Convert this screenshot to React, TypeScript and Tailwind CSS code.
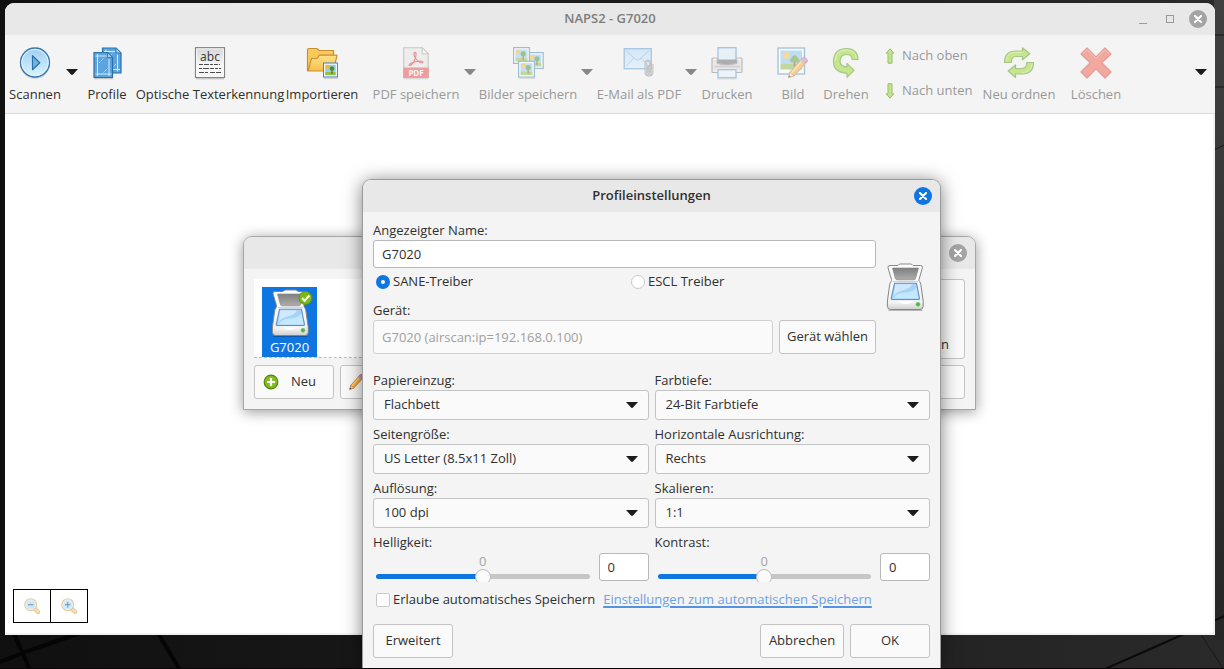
import { useState, type ReactNode } from "react";

function PlayIcon() {
  return (
    <svg width="32" height="33" viewBox="0 0 32 33">
      <defs>
        <linearGradient id="play" x1="0" y1="0" x2="0" y2="1">
          <stop offset="0" stopColor="#9fd0f4" />
          <stop offset="1" stopColor="#daf3fe" />
        </linearGradient>
      </defs>
      <ellipse cx="16" cy="17" rx="15" ry="15" fill="#00000022" />
      <circle cx="16" cy="15.5" r="14.5" fill="url(#play)" stroke="#3a77ae" strokeWidth="1.3" />
      <circle cx="16" cy="15.5" r="13.2" fill="none" stroke="#e3f3fd" strokeWidth="1" />
      <path d="M13.5 8.7v14l7.3-7z" fill="#6db4e6" stroke="#2c6ea8" strokeWidth="1.2" strokeLinejoin="round" />
    </svg>
  );
}

function ProfilesIcon() {
  const page = (
    <>
      <path d="M.5.5h13.5l5 5v20H.5z" fill="#5ba4de" stroke="#2c6ea8" strokeWidth="1.2" />
      <path d="M14 .5v5h5z" fill="#a5d0ee" stroke="#2c6ea8" strokeWidth=".8" />
      <path d="M4 2v22M15.5 7v17M2 4h11M2 22h16" stroke="#d5ebfa" strokeWidth="1" />
      <path d="M5.500 11l5-5M10 20.500l4-4" stroke="#c4e1f7" strokeWidth="1" strokeDasharray="1.500 .7" />
    </>
  );
  return (
    <svg width="32" height="33" viewBox="0 0 32 33">
      <path d="M3 31.500h19" stroke="#00000030" strokeWidth="1.500" />
      <g transform="translate(11 .500)">{page}</g>
      <g transform="translate(2.500 5)">{page}</g>
    </svg>
  );
}

function OcrIcon() {
  return (
    <svg width="32" height="33" viewBox="0 0 32 33">
      <defs>
        <linearGradient id="ocr" x1="0" y1="0" x2="0" y2="1">
          <stop offset="0" stopColor="#d6d6d8" />
          <stop offset=".6" stopColor="#f7f7f7" />
        </linearGradient>
      </defs>
      <path d="M2 31.700h28" stroke="#00000025" strokeWidth="1.500" />
      <rect x="1.500" y=".7" width="29" height="29.800" fill="url(#ocr)" stroke="#828282" strokeWidth="1.200" />
      <rect x="2.700" y="1.900" width="26.600" height="27.400" fill="none" stroke="#fff" strokeWidth=".8" />
      <text x="16" y="14" textAnchor="middle" fontSize="12" fill="#3d3d3d" className="font-['Noto_Sans',sans-serif]">
        abc
      </text>
      <path d="M5 17.500h21" stroke="#4c4c4c" strokeDasharray="4 1 5 1 3 1" />
      <path d="M5 21.500h22" stroke="#4c4c4c" strokeDasharray="3 1 6 1 4 1" />
      <path d="M5 25.500h22" stroke="#4c4c4c" strokeDasharray="5 1 3 2 5 1" />
    </svg>
  );
}

function Photo() {
  return (
    <>
      <rect x=".6" y=".6" width="15.800" height="15.800" fill="#fff" stroke="#4a86ba" strokeWidth="1.200" />
      <rect x="2.500" y="2.500" width="12" height="8" fill="#8fcdf6" />
      <rect x="2.500" y="10.500" width="12" height="4" fill="#92c043" />
      <circle cx="5" cy="5" r="2.200" fill="#fcb62b" />
      <path d="M10.200 8v5" stroke="#6d4b1d" strokeWidth="1.200" />
      <circle cx="10.200" cy="6.800" r="2.600" fill="#4f8e20" />
    </>
  );
}

function ImportIcon() {
  return (
    <svg width="33" height="33" viewBox="0 0 33 33">
      <defs>
        <linearGradient id="folder" x1="0" y1="0" x2="0" y2="1">
          <stop offset="0" stopColor="#fde28d" />
          <stop offset="1" stopColor="#f6bf4d" />
        </linearGradient>
      </defs>
      <path d="M1.500 24V3q0-1.500 1.500-1.500h8l2 2h14.500V20" fill="#f9c95b" stroke="#c98f31" strokeWidth="1.200" />
      <path d="M2 24L5.500 11.500h5.500l2.500-3.300H31L27.500 24z" fill="url(#folder)" stroke="#c98f31" strokeWidth="1.200" strokeLinejoin="round" />
      <path d="M18 31.300h14" stroke="#00000030" />
      <g transform="translate(17 15.500) scale(.88)">
        <Photo />
      </g>
    </svg>
  );
}

function PdfIcon() {
  return (
    <svg width="32" height="33" viewBox="0 0 32 33">
      <path d="M3.700.8h18.500l6 6v24H3.700z" fill="#e7e7e8" stroke="#9b9b9b" strokeWidth="1.100" />
      <path d="M22.200.8v6h6z" fill="#fff" stroke="#9b9b9b" strokeWidth="1" />
      <path
        d="M14.500 5.500c2.500-.5 1.500 3.500.5 6.500-1.300 3.500-3.500 6.500-5.300 6.500-1.500 0 .500-2.700 5-3.700 3.800-.9 8-.9 8.300.3.200 1.300-3 .8-5-1-2.500-2.400-4.300-6-4-7.700.1-.5.400-.8.500-.9z"
        fill="none"
        stroke="#e03538"
        strokeWidth="1.200"
      />
      <rect x="3.300" y="20.500" width="25.400" height="10.500" fill="#ee4449" />
      <text x="16" y="28.700" textAnchor="middle" fontSize="8" fontWeight="700" fill="#fff" className="font-['Noto_Sans',sans-serif]">
        PDF
      </text>
      <path d="M4 31.900h24" stroke="#00000030" />
    </svg>
  );
}

function ImagesIcon() {
  return (
    <svg width="32" height="33" viewBox="0 0 32 33">
      <g transform="translate(14.800 5)">
        <Photo />
      </g>
      <g transform="translate(1 0)">
        <Photo />
      </g>
      <g transform="translate(6 13.700)">
        <Photo />
      </g>
      <path d="M7 31.500h16" stroke="#00000030" />
    </svg>
  );
}

function MailIcon() {
  return (
    <svg width="32" height="33" viewBox="0 0 32 33">
      <defs>
        <linearGradient id="mail" x1="0" y1="0" x2="0" y2="1">
          <stop offset="0" stopColor="#b3dcf8" />
          <stop offset="1" stopColor="#daf0fd" />
        </linearGradient>
      </defs>
      <rect x="1.200" y="1.700" width="27.100" height="20" fill="url(#mail)" stroke="#5d9bcd" strokeWidth="1.300" />
      <path d="M3 3.500l9 8.500q2.500 2 5 0l9-8.500M3 19.500l8-8.500M26 19.500l-8-8.500" fill="none" stroke="#7fb2dc" strokeWidth="1" />
      <path
        d="M25 18v6.500q0 1.500 1 1.500t1-1.500V16q0-2.200-2.200-2.200T22.600 16v8.500q0 4 3.400 4t3.400-4V17"
        fill="none"
        stroke="#777c82"
        strokeWidth="2"
      />
      <path d="M25 18v6.500q0 1.500 1 1.500t1-1.500V16q0-2.200-2.200-2.200T22.600 16v8.500q0 4 3.400 4t3.400-4V17" fill="none" stroke="#c4c8cc" strokeWidth=".8" />
    </svg>
  );
}

function PrinterIcon() {
  return (
    <svg width="32" height="33" viewBox="0 0 32 33">
      <rect x="1" y="11" width="30" height="14.500" rx="1" fill="#dedede" stroke="#858585" strokeWidth="1.200" />
      <path d="M2.500 12.500h27M2.500 24h27" stroke="#f8f8f8" />
      <rect x="7" y=".7" width="18" height="13" fill="#dcebfb" stroke="#5b94c8" strokeWidth="1.300" />
      <path d="M6 12.500h20v4q-10 3-20 0z" fill="#6a6a6a" />
      <path d="M6 12.500v4q10 3 20 0v-4" fill="none" stroke="#8d8d8d" />
      <path d="M3 19.500h26" stroke="#b4b4b4" strokeWidth="2" />
      <rect x="7" y="22.700" width="18" height="8" fill="#e7f4ff" stroke="#5b94c8" strokeWidth="1.300" />
      <path d="M6 32h20" stroke="#00000030" />
    </svg>
  );
}

function Pencil() {
  return (
    <>
      <path d="M0 0l1.500-5.500L13-18.500l4.500 4L5.500-1.500z" fill="#f5a531" stroke="#b5762a" strokeWidth=".9" strokeLinejoin="round" />
      <path d="M3-4.500L14.500-17.500" stroke="#fdd58c" strokeWidth="1.800" />
      <path d="M0 0l1.500-5.500 4 4z" fill="#f7e0bb" stroke="#b5762a" strokeWidth=".7" />
      <path d="M13-18.500l1.800-2q3 0 4.500 4l-1.800 2z" fill="#dc86b8" stroke="#a5588a" strokeWidth=".8" />
      <path d="M0 0l.7-2.300L2.300-.9z" fill="#333" />
      <path d="M11.800-17.200l4.500 4" stroke="#a9a9a9" strokeWidth="1.500" />
    </>
  );
}

function EditImageIcon() {
  return (
    <svg width="32" height="33" viewBox="0 0 32 33">
      <rect x="1" y="1" width="26.500" height="26" fill="#fff" stroke="#5590c6" strokeWidth="1.300" />
      <rect x="3.500" y="3.500" width="21.500" height="14" fill="#88c8f5" />
      <rect x="3.500" y="17" width="21.500" height="5.500" fill="#8dbd46" />
      <circle cx="9" cy="8.500" r="3.300" fill="#fbc243" />
      <path d="M17.500 14v5.500" stroke="#755023" strokeWidth="1.700" />
      <path d="M17.700 8q2.300.5 2.800 2.800 2.300.8 1.800 3.200-1 1.800-4.600 1.600-4 .2-4.700-1.600-.3-2.400 1.700-3.200.6-2.300 3-2.800z" fill="#5f9a30" />
      <g transform="translate(11.500 30.500)">
        <Pencil />
      </g>
    </svg>
  );
}

function RotateIcon() {
  return (
    <svg width="32" height="33" viewBox="0 0 32 33">
      <path
        d="M28 12.500Q27.500 1.500 16.500 1.500 3.500 1.500 3.500 14.800q0 10.500 13.500 11.500v4l7-7-7-7v3.800q-7-.6-7-6 .3-6.600 6.500-6.600 5.500 0 5.700 5z"
        fill="#9ad82c"
        stroke="#5a9a1c"
        strokeWidth="1.200"
        strokeLinejoin="round"
      />
      <path d="M5 14Q5.500 3 16.500 3q8.500 0 10 8" fill="none" stroke="#cdf07a" strokeWidth="1" />
    </svg>
  );
}

function SmallArrow({ down }: { down?: boolean }) {
  return (
    <svg width="16" height="16" viewBox="0 0 16 16" className={down ? "rotate-180 opacity-60" : "opacity-60"}>
      <path d="M8 .8l3.800 4.400H10v10H6v-10H4.200z" fill="#a4dc3f" stroke="#5a9a1c" strokeWidth="1" strokeLinejoin="round" />
    </svg>
  );
}

function ReorderIcon() {
  return (
    <svg width="32" height="33" viewBox="0 0 32 33">
      <g fill="#9ad82c" stroke="#5a9a1c" strokeWidth="1.200" strokeLinejoin="round">
        <path d="M1.500 15.500Q1.500 4 13 4h6.500V.8l7.300 6-7.300 6V9.500H13q-4.500 0-4.800 6z" />
        <path d="M30.500 15.500q0 11.500-11.500 11.500h-6.500v3.500L5.200 24l7.300-6v3.500H19q4.500 0 4.800-6z" />
      </g>
      <path d="M3 13.500Q4 5.500 13 5.300h7M19 25.700q9-.3 10-8.500" fill="none" stroke="#cdf07a" strokeWidth=".9" />
    </svg>
  );
}

function DeleteIcon() {
  return (
    <svg width="32" height="33" viewBox="0 0 32 33">
      <path
        d="M7 1l9 9 9-9 6 6-9.200 8.700L31 25l-6 6-9-9.200L7 31l-6-6 9.200-9.300L1 7z"
        fill="#f0604d"
        stroke="#d2463a"
        strokeWidth="1.200"
        strokeLinejoin="round"
      />
      <path d="M2.500 7L7 2.500l9 9 9-9L29.500 7" fill="none" stroke="#fa9a8b" strokeWidth="1" />
    </svg>
  );
}

function ScannerIcon({ size, badge }: { size: number; badge?: boolean }) {
  return (
    <svg width={size} height={size} viewBox="0 0 48 48">
      <defs>
        <linearGradient id="glass" x1="0" y1="0" x2="0" y2="1">
          <stop offset="0" stopColor="#a9d2f7" />
          <stop offset="1" stopColor="#9fd6fb" />
        </linearGradient>
        <linearGradient id="lid" x1="0" y1="0" x2="0" y2="1">
          <stop offset="0" stopColor="#7f7f7f" />
          <stop offset="1" stopColor="#adadad" />
        </linearGradient>
        <linearGradient id="body" x1="0" y1="0" x2="0" y2="1">
          <stop offset="0" stopColor="#ffffff" />
          <stop offset=".85" stopColor="#f2f2f2" />
          <stop offset="1" stopColor="#cfcfcf" />
        </linearGradient>
      </defs>
      <path d="M8 47.300h33" stroke="#00000040" strokeWidth="1.200" strokeLinecap="round" />
      <path
        d="M9 2.500h8q1-1.500 2.500-1.500h10q1.500 0 2.500 1.500h7.500q2.300 0 1.900 2.300L38 16.500q-.2 1.200.7 2.200.9 1 1.100 2.800l2.400 16.500V43.500q-.2 3-3.200 3H9.600q-3 0-3.200-3V38l2.300-16.500q.3-1.800 1.300-2.800.8-1 .5-2.200L7 4.800Q6.700 2.500 9 2.500z"
        fill="url(#body)"
        stroke="#868686"
        strokeWidth="1"
      />
      <path d="M11.500 5h26l-3 10.500q-.4 1.300-1.500 1.300H16q-1.200 0-1.600-1.300z" fill="url(#lid)" stroke="#8a8a8a" strokeWidth=".7" />
      <path d="M12 18.600h25" stroke="#cfcfcf" strokeWidth="1" />
      <path d="M13.500 20.300h22l2.900 14.700q.2 1.500-1.200 1.500H11.500q-1.400 0-1.200-1.500z" fill="url(#glass)" stroke="#5f8fc9" strokeWidth="1.100" strokeLinejoin="round" />
      <path d="M14.300 21.200H31q-2 4.500-9 6t-9.500 6z" fill="#dcedfd" opacity=".8" />
      <path d="M12 35.500q4-6 12-6 7 0 11.500-5l2 11z" fill="#d3f0ff" opacity=".7" />
      <path d="M17 38.500q7.500 5 15 0z" fill="#fff" />
      <circle cx="37" cy="41.300" r="2" fill="#3ec23a" stroke="#7fb77c" strokeWidth=".6" />
      {badge && (
        <>
          <circle cx="39.500" cy="9" r="6.500" fill="#7bb918" stroke="#5b9410" />
          <path d="M36 9l2.700 2.700 4.700-5.200" fill="none" stroke="#fff" strokeWidth="2" />
        </>
      )}
    </svg>
  );
}

function PlusIcon() {
  return (
    <svg width="16" height="16" viewBox="0 0 16 16">
      <circle cx="8" cy="8" r="6.800" fill="#84bd1c" stroke="#4f8509" strokeWidth="1.200" />
      <path d="M8 4v8M4 8h8" stroke="#fff" strokeWidth="2.200" />
    </svg>
  );
}

function MagnifierIcon({ plus }: { plus?: boolean }) {
  return (
    <svg width="16" height="16" viewBox="0 0 16 16" className="opacity-60">
      <path d="M11 11l3 3" stroke="#c9904a" strokeWidth="4" strokeLinecap="round" />
      <path d="M11.500 11.500l2.500 2.500" stroke="#fbc678" strokeWidth="2.800" strokeLinecap="round" />
      <circle cx="6.700" cy="6.700" r="5.800" fill="#a9dcfb" stroke="#e0a95c" strokeWidth="1.400" />
      <circle cx="6.700" cy="6.700" r="4.800" fill="none" stroke="#e9f6fe" strokeWidth=".7" />
      <path d={plus ? "M4 6.700h5.400M6.700 4v5.400" : "M4 6.700h5.400"} stroke="#2c5c8c" strokeWidth="1.200" />
    </svg>
  );
}

function Caret() {
  return (
    <svg width="12" height="6" viewBox="0 0 12 6" className="pointer-events-none">
      <path d="M0 0h12L7 5.500Q6 6.300 5 5.500z" fill="#1c1c1c" />
    </svg>
  );
}

function Wallpaper() {
  return (
    <svg className="absolute inset-0 size-full" viewBox="0 0 1224 669" preserveAspectRatio="none">
      <defs>
        <linearGradient id="edge" x1="0" y1="0" x2="0" y2="1">
          <stop offset="0" stopColor="#404040" />
          <stop offset="1" stopColor="#262626" />
        </linearGradient>
      </defs>
      <rect x="1214" width="10" height="640" fill="url(#edge)" />
      <path d="M-5 664l30-12 110-38M8 620l22 50M150 620l30 50" fill="none" stroke="#050505" strokeWidth="4" />
      <path d="M1098 672l50-22 90-40" fill="none" stroke="#0a0a0a" strokeWidth="2" />
      <path d="M1198 630l26 40M1214 35h10M1214 87h10M1214 150l10-5" fill="none" stroke="#181818" />
      <path d="M0 668.500h1224" stroke="#0a0508" />
    </svg>
  );
}

function CloseButton({ active }: { active?: boolean }) {
  return (
    <button
      aria-label="Schließen"
      className={`flex size-[18px] items-center justify-center rounded-full ${active ? "bg-[#0f75e0]" : "bg-[#a4a4a4]"}`}
    >
      <svg width="8" height="8" viewBox="0 0 8 8">
        <path d="M1 1l6 6M7 1L1 7" stroke="#fff" strokeWidth="2.200" strokeLinecap="round" />
      </svg>
    </button>
  );
}

type ToolProps = { label: string; icon: ReactNode; className: string; disabled?: boolean };

function Tool({ label, icon, className, disabled }: ToolProps) {
  return (
    <button
      disabled={disabled}
      className={`flex shrink-0 flex-col items-center pt-3 whitespace-nowrap disabled:text-[#999] ${className}`}
    >
      <span className={disabled ? "opacity-50" : ""}>{icon}</span>
      <span className="mt-1 leading-5">{label}</span>
    </button>
  );
}

function MenuArrow({ label, className, disabled }: { label: string; className: string; disabled?: boolean }) {
  return (
    <button
      aria-label={label}
      disabled={disabled}
      className={`flex shrink-0 items-center justify-center pb-1 disabled:opacity-50 ${className}`}
    >
      <Caret />
    </button>
  );
}

function SelectField({ id, label, value }: { id: string; label: string; value: string }) {
  return (
    <div className="min-w-0">
      <label htmlFor={id} className="block leading-5">
        {label}
      </label>
      <div className="relative">
        <select
          id={id}
          className="block h-[30px] w-full appearance-none rounded-[3px] border border-[#c3c3c3] bg-[#fafafa] px-2.5"
        >
          <option>{value}</option>
        </select>
        <span className="pointer-events-none absolute top-3 right-[11px] flex">
          <Caret />
        </span>
      </div>
    </div>
  );
}

function SliderField({ id, label }: { id: string; label: string }) {
  const [value, setValue] = useState(0);
  const fill = (value + 1000) / 20;

  return (
    <div className="min-w-0">
      <label htmlFor={id} className="block leading-5">
        {label}
      </label>
      <div className="flex items-center">
        <div className="flex h-[30px] min-w-0 flex-1 flex-col overflow-hidden px-[3px]">
          <span className="text-center leading-[18px] text-[#a5a5a5]">{value}</span>
          <input
            id={id}
            type="range"
            min={-1000}
            max={1000}
            value={value}
            onChange={(e) => setValue(Number(e.target.value))}
            style={{ backgroundImage: `linear-gradient(to right, #0f75e0 ${fill}%, #c6c6c6 ${fill}%)` }}
            className="mt-1 block h-[5px] w-full shrink-0 appearance-none rounded-full [&::-webkit-slider-thumb]:size-4 [&::-webkit-slider-thumb]:appearance-none [&::-webkit-slider-thumb]:rounded-full [&::-webkit-slider-thumb]:border [&::-webkit-slider-thumb]:border-[#bdbdbd] [&::-webkit-slider-thumb]:bg-[#fafafa]"
          />
        </div>
        <input
          type="text"
          aria-label={`${label} Wert`}
          value={value}
          onChange={(e) => setValue(Number(e.target.value) || 0)}
          className="ml-1.5 h-7 w-[50px] rounded-[3px] border border-[#b8b8b8] bg-white px-2"
        />
      </div>
    </div>
  );
}

const boxButton = "rounded-[3px] border border-[#c3c3c3] bg-[#fafafa]";

function ProfilesWindow() {
  return (
    <section className="absolute top-[236px] left-[243px] w-[733px] rounded-t-[9px] border border-[#a6a6a6] bg-[#f4f4f4] shadow-[0_2px_14px_rgba(0,0,0,0.4)]">
      <div className="flex h-8 items-center justify-end rounded-t-[8px] bg-[#e8e8e8] pr-2">
        <CloseButton />
      </div>
      <div className="p-2.5">
        <div className="flex gap-1.5">
          <div className="h-[79px] flex-1 border-b border-dashed border-[#bbb] bg-white px-2 pt-2">
            <div className="flex w-[55px] flex-col items-center bg-[#0f75e0] pt-0.5 text-white">
              <ScannerIcon size={48} badge />
              <span className="leading-5">G7020</span>
            </div>
          </div>
          <button className={`flex h-20 w-[84px] flex-col items-center justify-end pb-1 ${boxButton}`}>
            <PlayIcon />
            <span className="mt-1 leading-5">Scannen</span>
          </button>
        </div>
        <div className="mt-1.5 flex gap-1.5">
          <button className={`flex h-[34px] w-20 items-center gap-3 px-2 ${boxButton}`}>
            <PlusIcon />
            Neu
          </button>
          <button aria-label="Bearbeiten" className={`flex h-[34px] w-24 items-center px-2 ${boxButton}`}>
            <svg width="16" height="16" viewBox="0 0 22 22">
              <g transform="translate(1 21)">
                <Pencil />
              </g>
            </svg>
          </button>
          <button className={`ml-auto h-[34px] w-[84px] ${boxButton}`}>Fertig</button>
        </div>
      </div>
    </section>
  );
}

function SettingsWindow() {
  const [driver, setDriver] = useState("sane");
  const [name, setName] = useState("G7020");

  return (
    <section className="absolute top-[179px] left-[362px] w-[579px] rounded-t-[9px] border border-b-0 border-[#9b9b9b] bg-[#f4f4f4] shadow-[0_2px_18px_rgba(0,0,0,0.5)]">
      <div className="grid h-8 grid-cols-[1fr_auto_1fr] items-center rounded-t-[8px] bg-[#e8e8e8] px-2">
        <h2 className="col-start-2 font-semibold">Profileinstellungen</h2>
        <div className="flex justify-end">
          <CloseButton active />
        </div>
      </div>

      <form className="px-2.5 pt-2 pb-2.5" onSubmit={(e) => e.preventDefault()}>
        <div className="flex">
          <div className="min-w-0 flex-1">
            <label htmlFor="name" className="block leading-5">
              Angezeigter Name:
            </label>
            <input
              id="name"
              value={name}
              onChange={(e) => setName(e.target.value)}
              className="block h-7 w-full rounded-[3px] border border-[#b8b8b8] bg-white px-2"
            />
            <div className="grid h-7 grid-cols-[255px_1fr] items-center pl-[3px]">
              {[
                ["sane", "SANE-Treiber"],
                ["escl", "ESCL Treiber"],
              ].map(([id, label]) => (
                <label key={id} className="flex items-center gap-[3px]">
                  <input
                    type="radio"
                    name="driver"
                    checked={driver === id}
                    onChange={() => setDriver(id)}
                    className="size-3.5 appearance-none rounded-full border border-[#c9c9c9] bg-white checked:border-5 checked:border-[#0f75e0]"
                  />
                  {label}
                </label>
              ))}
            </div>
            <label htmlFor="device" className="mt-1 block leading-5">
              Gerät:
            </label>
            <div className="flex gap-1.5">
              <input
                id="device"
                disabled
                value="G7020 (airscan:ip=192.168.0.100)"
                className="h-[34px] min-w-0 flex-1 rounded-[3px] border border-[#d0d0d0] bg-[#fafafa] px-2 text-[#a0a0a0]"
              />
              <button className={`h-[34px] w-[97px] whitespace-nowrap ${boxButton}`}>Gerät wählen</button>
            </div>
          </div>
          <div className="flex w-[54px] shrink-0 items-center justify-center pl-1">
            <ScannerIcon size={48} />
          </div>
        </div>

        <div className="mt-4 grid grid-cols-2 gap-x-1.5 gap-y-1">
          <SelectField id="source" label="Papiereinzug:" value="Flachbett" />
          <SelectField id="depth" label="Farbtiefe:" value="24-Bit Farbtiefe" />
          <SelectField id="size" label="Seitengröße:" value="US Letter (8.5x11 Zoll)" />
          <SelectField id="align" label="Horizontale Ausrichtung:" value="Rechts" />
          <SelectField id="dpi" label="Auflösung:" value="100 dpi" />
          <SelectField id="scale" label="Skalieren:" value="1:1" />
          <SliderField id="brightness" label="Helligkeit:" />
          <SliderField id="contrast" label="Kontrast:" />
        </div>

        <div className="mt-2 flex h-5 items-center gap-2 pl-[3px] whitespace-nowrap">
          <label className="flex items-center gap-[3px]">
            <input type="checkbox" className="size-3.5 appearance-none rounded-xs border border-[#c9c9c9] bg-white checked:bg-[#0f75e0]" />
            Erlaube automatisches Speichern
          </label>
          <a href="#autosave" className="text-[#6ba3e6] underline decoration-[#5294e2] decoration-2 underline-offset-2">
            Einstellungen zum automatischen Speichern
          </a>
        </div>

        <div className="mt-3.5 flex gap-1.5">
          <button className={`h-[34px] w-20 ${boxButton}`}>Erweitert</button>
          <button className={`ml-auto h-[34px] w-[84px] ${boxButton}`}>Abbrechen</button>
          <button className={`h-[34px] w-20 ${boxButton}`}>OK</button>
        </div>
      </form>
    </section>
  );
}

export default function App() {
  return (
    <div className="relative flex h-screen flex-col overflow-hidden bg-linear-to-r from-[#101010] via-[#1c1c1c] to-[#2a2a2a] pt-[3px] pr-[9px] pb-[34px] pl-[5px] font-['Open_Sans','Noto_Sans',sans-serif] text-[13px] text-[#303030]">
      <Wallpaper />
      <main className="relative flex flex-1 flex-col overflow-hidden rounded-t-[9px] border-b-2 border-[#f2f2f2] bg-white">
        <header className="grid h-8 grid-cols-[1fr_auto_1fr] items-center bg-[#e8e8e8] px-2">
          <h1 className="col-start-2 font-semibold text-[#7d7d7d]">NAPS2 - G7020</h1>
          <div className="flex items-center justify-end gap-[15px]">
            <button aria-label="Minimieren" className="mr-1 h-[9px] w-2 border-b border-[#999]" />
            <button aria-label="Maximieren" className="size-2 border border-[#999]" />
            <CloseButton />
          </div>
        </header>

        <nav className="flex h-[79px] shrink-0 border-b border-[#dadada] bg-[#f4f4f4]">
          <Tool label="Scannen" icon={<PlayIcon />} className="w-[60px]" />
          <MenuArrow label="Scanprofil wählen" className="w-3.5" />
          <Tool label="Profile" icon={<ProfilesIcon />} className="w-14" />
          <Tool label="Optische Texterkennung" icon={<OcrIcon />} className="w-[150px]" />
          <Tool label="Importieren" icon={<ImportIcon />} className="w-[74px]" />
          <Tool label="PDF speichern" icon={<PdfIcon />} className="ml-[13px] w-[88px]" disabled />
          <MenuArrow label="PDF Optionen" className="w-[19px]" disabled />
          <Tool label="Bilder speichern" icon={<ImagesIcon />} className="w-[98px]" disabled />
          <MenuArrow label="Bilder Optionen" className="w-5" disabled />
          <Tool label="E-Mail als PDF" icon={<MailIcon />} className="w-[84px]" disabled />
          <MenuArrow label="E-Mail Optionen" className="w-[19px]" disabled />
          <Tool label="Drucken" icon={<PrinterIcon />} className="w-[54px]" disabled />
          <Tool label="Bild" icon={<EditImageIcon />} className="ml-5 w-[38px]" disabled />
          <Tool label="Drehen" icon={<RotateIcon />} className="ml-[11px] w-[46px]" disabled />
          <div className="ml-[13px] flex w-[99px] shrink-0 flex-col gap-[15px] pt-[11px] text-[#999]">
            <button disabled className="flex h-5 items-center gap-1 whitespace-nowrap">
              <SmallArrow />
              Nach oben
            </button>
            <button disabled className="flex h-5 items-center gap-1 whitespace-nowrap">
              <SmallArrow down />
              Nach unten
            </button>
          </div>
          <Tool label="Neu ordnen" icon={<ReorderIcon />} className="w-[76px]" disabled />
          <Tool label="Löschen" icon={<DeleteIcon />} className="ml-3 w-[54px]" disabled />
          <MenuArrow label="Mehr" className="ml-auto w-7" />
        </nav>

        <div className="flex flex-1 flex-col border-r-2 border-[#f2f2f2] px-2 pb-2.5">
          <div className="mt-auto flex">
            <button aria-label="Verkleinern" className="flex h-[34px] w-[38px] items-center justify-center border border-black">
              <MagnifierIcon />
            </button>
            <button aria-label="Vergrößern" className="flex h-[34px] w-[37px] items-center justify-center border border-l-0 border-black">
              <MagnifierIcon plus />
            </button>
          </div>
        </div>
      </main>
      <ProfilesWindow />
      <SettingsWindow />
    </div>
  );
}
